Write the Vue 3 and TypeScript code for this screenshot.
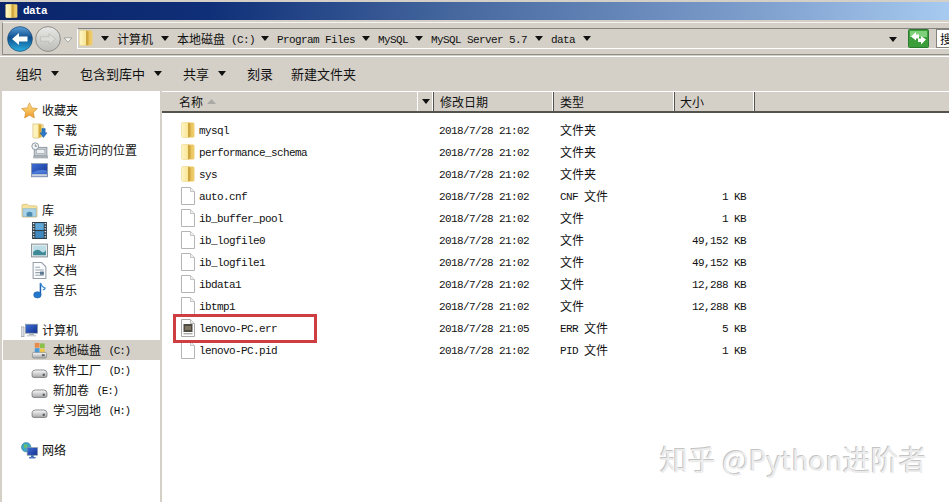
<script setup lang="ts">
interface Crumb { label: string; w: number }
interface NavItem { icon: string; label: string; child?: boolean; selected?: boolean; gapBefore?: boolean }
interface FileRow { name: string; icon: string; date: string; type: string; size: string }

const crumbs: Crumb[] = [
  { label: '计算机', w: 60 },
  { label: '本地磁盘\u00a0(C:)', w: 100 },
  { label: 'Program Files', w: 101 },
  { label: 'MySQL', w: 53 },
  { label: 'MySQL Server 5.7', w: 120 },
  { label: 'data', w: 48 },
]

const actions = [
  { label: '组织', menu: true, w: 64 },
  { label: '包含到库中', menu: true, w: 103 },
  { label: '共享', menu: true, w: 64 },
  { label: '刻录', menu: false, w: 44 },
  { label: '新建文件夹', menu: false, w: 70 },
]

const nav: NavItem[] = [
  { icon: 'star', label: '收藏夹' },
  { icon: 'dl', label: '下载', child: true },
  { icon: 'recent', label: '最近访问的位置', child: true },
  { icon: 'desk', label: '桌面', child: true },
  { icon: 'lib', label: '库', gapBefore: true },
  { icon: 'video', label: '视频', child: true },
  { icon: 'pic', label: '图片', child: true },
  { icon: 'doc', label: '文档', child: true },
  { icon: 'music', label: '音乐', child: true },
  { icon: 'pc', label: '计算机', gapBefore: true },
  { icon: 'cdrive', label: '本地磁盘\u00a0(C:)', child: true, selected: true },
  { icon: 'drive', label: '软件工厂\u00a0(D:)', child: true },
  { icon: 'drive', label: '新加卷\u00a0(E:)', child: true },
  { icon: 'drive', label: '学习园地\u00a0(H:)', child: true },
  { icon: 'net', label: '网络', gapBefore: true },
]

const d2 = '2018/7/28 21:02'
const files: FileRow[] = [
  { name: 'mysql', icon: 'folder', date: d2, type: '文件夹', size: '' },
  { name: 'performance_schema', icon: 'folder', date: d2, type: '文件夹', size: '' },
  { name: 'sys', icon: 'folder', date: d2, type: '文件夹', size: '' },
  { name: 'auto.cnf', icon: 'file', date: d2, type: 'CNF 文件', size: '1 KB' },
  { name: 'ib_buffer_pool', icon: 'file', date: d2, type: '文件', size: '1 KB' },
  { name: 'ib_logfile0', icon: 'file', date: d2, type: '文件', size: '49,152 KB' },
  { name: 'ib_logfile1', icon: 'file', date: d2, type: '文件', size: '49,152 KB' },
  { name: 'ibdata1', icon: 'file', date: d2, type: '文件', size: '12,288 KB' },
  { name: 'ibtmp1', icon: 'file', date: d2, type: '文件', size: '12,288 KB' },
  { name: 'lenovo-PC.err', icon: 'err', date: '2018/7/28 21:05', type: 'ERR 文件', size: '5 KB' },
  { name: 'lenovo-PC.pid', icon: 'file', date: d2, type: 'PID 文件', size: '1 KB' },
]

function runs(s: string): { t: string; cjk: boolean }[] {
  const out: { t: string; cjk: boolean }[] = []
  for (const m of s.matchAll(/[\u4e00-\u9fff]+|[^\u4e00-\u9fff]+/g)) {
    out.push({ t: m[0], cjk: /[\u4e00-\u9fff]/.test(m[0]) })
  }
  return out
}
</script>

<template>
  <div class="app">
    <svg class="defs" aria-hidden="true">
      <defs>
        <linearGradient id="gFolderL" x1="0" y1="0" x2="1" y2="0">
          <stop offset="0" stop-color="#fdf6c6" /><stop offset="1" stop-color="#f8e596" />
        </linearGradient>
        <linearGradient id="gFolderR" x1="0" y1="0" x2="1" y2="0">
          <stop offset="0" stop-color="#d9a93a" /><stop offset="1" stop-color="#f0cf6e" />
        </linearGradient>
        <linearGradient id="gBlue" x1="0" y1="0" x2="0" y2="1">
          <stop offset="0" stop-color="#5a9fd8" /><stop offset=".45" stop-color="#0f4f8e" /><stop offset="1" stop-color="#2bb0e0" />
        </linearGradient>
        <linearGradient id="gGrey" x1="0" y1="0" x2="0" y2="1">
          <stop offset="0" stop-color="#e8e8e6" /><stop offset="1" stop-color="#bcbcb8" />
        </linearGradient>
        <linearGradient id="gStar" x1="0" y1="0" x2="0" y2="1">
          <stop offset="0" stop-color="#fde58a" /><stop offset="1" stop-color="#ee9a2c" />
        </linearGradient>
        <linearGradient id="gScreen" x1="0" y1="0" x2="1" y2="1">
          <stop offset="0" stop-color="#3f6fd8" /><stop offset="1" stop-color="#12308e" />
        </linearGradient>
        <linearGradient id="gDrive" x1="0" y1="0" x2="0" y2="1">
          <stop offset="0" stop-color="#fafafa" /><stop offset="1" stop-color="#a8a8a8" />
        </linearGradient>
      </defs>
      <symbol id="i-folder" viewBox="0 0 16 20">
        <path d="M1.5 3.5 Q1.5 2.5 2.5 2.5 H13 Q14.5 2.5 14.5 4 V16 Q14.5 17.5 13 17.5 H3 Q1.5 17.5 1.5 16 Z" fill="url(#gFolderR)" />
        <path d="M1.5 3.5 Q1.5 2.5 2.5 2.5 H8 V17.5 H3 Q1.5 17.5 1.5 16 Z" fill="url(#gFolderL)" />
        <path d="M8 2.5 L10.5 3.8 V16.5 L8 17.5 Z" fill="#cfa63e" />
      </symbol>
      <symbol id="i-file" viewBox="0 0 16 20">
        <path d="M1.5 1.5 H10.5 L14.5 5.5 V18.5 H1.5 Z" fill="#fff" stroke="#b4b4b4" />
        <path d="M10.5 1.5 V5.5 H14.5" fill="#f0f0f0" stroke="#c4c4c4" />
      </symbol>
      <symbol id="i-err" viewBox="0 0 16 20">
        <path d="M1.5 1.5 H10.5 L14.5 5.5 V18.5 H1.5 Z" fill="#fdfdfd" stroke="#a8a8a8" />
        <path d="M10.5 1.5 V5.5 H14.5" fill="#eee" stroke="#bbb" />
        <rect x="3.5" y="6" width="9" height="8" fill="#4e4a40" />
        <rect x="5" y="8" width="6" height="4" fill="#7d7462" />
        <rect x="3.5" y="15" width="9" height="1.4" fill="#aaa" />
      </symbol>
      <symbol id="i-star" viewBox="0 0 16 16">
        <path d="M8 .8 L10.2 5.6 L15.4 6.2 L11.6 9.8 L12.6 15 L8 12.4 L3.4 15 L4.4 9.8 L.6 6.2 L5.8 5.6 Z" fill="url(#gStar)" stroke="#d08a2a" stroke-width=".6" />
      </symbol>
      <symbol id="i-dl" viewBox="0 0 16 18">
        <path d="M1 2 H9 L12 3 V15 L7 17 H2 Q1 17 1 16 Z" fill="url(#gFolderL)" stroke="#c8a24a" stroke-width=".5" />
        <path d="M7 2 L10 3 V15 L7 17 Z" fill="#d9a93a" />
        <path d="M10.5 7 H14 V11.5 H16 L12.2 16.5 L8.5 11.5 H10.5 Z" fill="#2a78c8" stroke="#185a9e" stroke-width=".5" />
      </symbol>
      <symbol id="i-recent" viewBox="0 0 16 16">
        <rect x="3" y="5" width="12" height="8" fill="#c6ccd2" stroke="#7b8690" stroke-width=".7" />
        <rect x="5" y="7" width="8" height="4" fill="#eef0f2" stroke="#8d99a3" stroke-width=".5" />
        <rect x="2" y="13" width="14" height="2.4" fill="#a9b0b6" />
        <circle cx="4" cy="4" r="3.2" fill="#f5f7f8" stroke="#7b8a96" stroke-width=".8" />
        <path d="M4 2.2 V4 H5.6" stroke="#52606c" stroke-width=".7" fill="none" />
      </symbol>
      <symbol id="i-desk" viewBox="0 0 16 14">
        <rect x=".5" y=".5" width="15" height="12.5" fill="url(#gScreen)" stroke="#7f8a9c" stroke-width=".6" />
        <path d="M1 9 Q8 5 15 7 V10 H1 Z" fill="#5c8ee8" opacity=".7" />
        <rect x="1" y="10.4" width="14" height="2.2" fill="#c9d2de" />
      </symbol>
      <symbol id="i-lib" viewBox="0 0 18 16">
        <path d="M1 3 Q1 1.5 2.5 1.5 H7 L8.5 3 H15.5 Q17 3 17 4.5 V14 Q17 15 16 15 H2 Q1 15 1 14 Z" fill="#f6e3a0" stroke="#c9ad58" stroke-width=".6" />
        <path d="M2 6 H16 V14.4 H2 Z" fill="#a8d2e8" stroke="#7aa8c2" stroke-width=".5" />
        <path d="M6 14.4 V10.5 Q9 8.2 12 10.5 V14.4 Z" fill="#4f8bb0" />
      </symbol>
      <symbol id="i-video" viewBox="0 0 14 16">
        <rect x="0" y="0" width="14" height="16" fill="#2e3c48" />
        <rect x="3" y="1" width="8" height="6.5" fill="#5fa8d8" />
        <rect x="3" y="8.5" width="8" height="6.5" fill="#3f88c0" />
        <path d="M.8 1.5 H2.2 M.8 4 H2.2 M.8 6.5 H2.2 M.8 9 H2.2 M.8 11.5 H2.2 M.8 14 H2.2 M11.8 1.5 H13.2 M11.8 4 H13.2 M11.8 6.5 H13.2 M11.8 9 H13.2 M11.8 11.5 H13.2 M11.8 14 H13.2" stroke="#e6eef4" stroke-width="1.1" />
      </symbol>
      <symbol id="i-pic" viewBox="0 0 16 13">
        <rect x=".5" y=".5" width="15" height="12" fill="#e9edee" stroke="#8c979e" />
        <rect x="2" y="2" width="12" height="9" fill="#bcdde6" />
        <path d="M2 8 Q6 4 9 7 T14 6 V11 H2 Z" fill="#3f8a96" />
      </symbol>
      <symbol id="i-doc" viewBox="0 0 13 16">
        <path d="M.5 .5 H8.5 L12.5 4.5 V15.5 H.5 Z" fill="#fbfcfd" stroke="#97a0a8" />
        <path d="M2.5 5 H7 M2.5 7.5 H10.5 M2.5 10 H10.5 M2.5 12.5 H10.5" stroke="#98a4ae" />
        <rect x="7" y="9" width="3.6" height="3" fill="#5b7690" />
      </symbol>
      <symbol id="i-music" viewBox="0 0 14 18">
        <path d="M8 1 V13" stroke="#1b62b0" stroke-width="1.6" fill="none" />
        <path d="M8 1 Q9 5 13 6.5 Q12.5 8.5 10.5 8" stroke="#3f8fd8" stroke-width="1.4" fill="none" />
        <ellipse cx="4.8" cy="13.6" rx="4" ry="3.4" fill="#2478cc" stroke="#15559c" stroke-width=".5" />
      </symbol>
      <symbol id="i-pc" viewBox="0 0 19 16">
        <rect x="0" y="4" width="3.4" height="11" fill="#d9dde0" stroke="#7f8a92" stroke-width=".6" />
        <rect x="5" y="1" width="13.5" height="10" fill="url(#gScreen)" stroke="#8a96a0" stroke-width=".8" />
        <rect x="9" y="11" width="5.6" height="2" fill="#aab2b8" />
        <rect x="6.5" y="13" width="10.5" height="1.6" fill="#c8ced2" />
      </symbol>
      <symbol id="i-cdrive" viewBox="0 0 16 18">
        <rect x="3" y="1" width="5" height="5" fill="#e88a4a" />
        <rect x="8.5" y="1.5" width="5" height="5" fill="#8cc04a" />
        <rect x="3" y="6.5" width="5" height="5" fill="#4a9ad8" />
        <rect x="8.5" y="7" width="5" height="5" fill="#f0c84a" />
        <rect x="0.5" y="11" width="15" height="6" rx="1.5" fill="url(#gDrive)" stroke="#6f7478" stroke-width=".6" />
        <rect x="10.5" y="13" width="3" height="2" fill="#5a5e60" />
      </symbol>
      <symbol id="i-drive" viewBox="0 0 16 16">
        <path d="M1 10 Q1.5 7.5 4 7.5 H12 Q14.5 7.5 15 10 V13 Q15 14.5 13.5 14.5 H2.5 Q1 14.5 1 13 Z" fill="url(#gDrive)" stroke="#666a6e" stroke-width=".7" />
        <rect x="11" y="11" width="2" height="2" fill="#55595c" />
      </symbol>
      <symbol id="i-net" viewBox="0 0 18 18">
        <circle cx="5.5" cy="5.5" r="5" fill="#3fa6c8" stroke="#1b7290" stroke-width=".5" />
        <path d="M3 3 Q5 1.5 7 3 L6 6 L3.5 6.5 Z" fill="#6cc06a" />
        <rect x="6.5" y="6" width="11" height="8" fill="url(#gScreen)" stroke="#8a96a0" stroke-width=".7" />
        <rect x="10.5" y="14" width="3" height="2" fill="#3a68b8" />
        <rect x="8.5" y="16" width="7" height="1.4" fill="#3a68b8" />
      </symbol>
    </svg>

    <header class="titlebar">
      <svg class="title-icon"><use href="#i-folder" /></svg>
      <span class="title-text">data</span>
    </header>

    <div class="address-row">
      <div class="address-frame">
        <svg class="nav-btn back" viewBox="0 0 26 26">
          <circle cx="13" cy="13" r="12.4" fill="url(#gBlue)" stroke="#0f3d66" stroke-width=".6" />
          <path d="M5 13 L12 7 V10.6 H20.5 V15.4 H12 V19 Z" fill="#fff" />
        </svg>
        <svg class="nav-btn fwd" viewBox="0 0 26 26">
          <circle cx="13" cy="13" r="12.4" fill="url(#gGrey)" stroke="#8e8e8a" />
          <path d="M20.5 13 L14 7.5 V10.8 H5.5 V15.2 H14 V18.5 Z" fill="#dcdcd8" stroke="#b4b4b0" stroke-width=".6" />
        </svg>
        <svg class="hist" viewBox="0 0 10 6"><path d="M1 .8 H9 L5 5.2 Z" fill="#f4f4f2" stroke="#8f8f8b" stroke-width=".7" /></svg>
        <div class="crumb-field">
          <svg class="crumb-folder"><use href="#i-folder" /></svg>
          <div class="crumbs">
            <div v-for="c in crumbs" :key="c.label" class="crumb" :style="{ width: c.w + 'px' }">
              <i class="tri"></i>
              <span class="txt"><span v-for="(r, i) in runs(c.label)" :key="i" :class="r.cjk ? 'cjk' : 'lat up'">{{ r.t }}</span></span>
            </div>
            <i class="tri last"></i>
          </div>
          <i class="tri end"></i>
          <svg class="refresh" viewBox="0 0 21 19">
            <rect x=".5" y=".5" width="20" height="18" rx="1" fill="#3b9e3b" stroke="#2c7a30" />
            <rect x="2" y="2" width="17" height="6" fill="#7ed07a" />
            <path d="M3 7.5 L8 3 V5.5 H11 V9.5 H8 V11.5 Z" fill="#fff" />
            <path d="M18 10.5 L13 15.5 V13 H10 V9.5 H13 V7 Z" fill="#fff" />
          </svg>
          <div class="search"><span class="cjk">搜</span></div>
        </div>
      </div>
    </div>

    <div class="commands">
      <div v-for="a in actions" :key="a.label" class="cmd" :style="{ width: a.w + 'px' }">
        <span class="cjk big">{{ a.label }}</span>
        <i v-if="a.menu" class="tri"></i>
      </div>
    </div>

    <main class="main">
      <aside class="sidebar">
        <div
          v-for="n in nav"
          :key="n.label"
          class="nav-item"
          :class="{ child: n.child, selected: n.selected, gap: n.gapBefore }"
        >
          <svg class="nav-icon"><use :href="'#i-' + n.icon" /></svg>
          <span class="txt"><span v-for="(r, i) in runs(n.label)" :key="i" :class="r.cjk ? 'cjk' : 'lat up tight'">{{ r.t }}</span></span>
        </div>
      </aside>

      <section class="list">
        <div class="thead">
          <div class="th name">
            <span class="cjk">名称</span>
            <svg class="sort" viewBox="0 0 9 5"><path d="M4.5 0 L9 5 H0 Z" fill="#a9a9a5" /></svg>
            <span class="th-drop"><i class="tri"></i></span>
          </div>
          <div class="th date"><span class="cjk">修改日期</span></div>
          <div class="th type"><span class="cjk">类型</span></div>
          <div class="th size"><span class="cjk">大小</span></div>
        </div>
        <div class="rows">
          <div v-for="f in files" :key="f.name" class="row">
            <div class="c-name">
              <svg class="file-icon"><use :href="'#i-' + f.icon" /></svg>
              <span class="lat low">{{ f.name }}</span>
            </div>
            <div class="c-date lat low">{{ f.date }}</div>
            <div class="c-type"><span v-for="(r, i) in runs(f.type)" :key="i" :class="r.cjk ? 'cjk' : 'lat up'">{{ r.t }}</span></div>
            <div class="c-size lat low">{{ f.size }}</div>
          </div>
        </div>
        <div class="mark"></div>
      </section>
    </main>

    <div class="watermark">知乎 @Python进阶者</div>
  </div>
</template>

<style scoped>
.app {
  position: relative;
  width: 949px;
  height: 502px;
  overflow: hidden;
  display: flex;
  flex-direction: column;
  background: #d4d0c8;
  color: #111;
  font-family: "Noto Sans CJK SC", sans-serif;
  font-size: 12px;
}
.defs { display: block; width: 0; height: 0; overflow: hidden; }
.cjk { font-family: "Noto Sans CJK SC", sans-serif; font-size: 12px; }
.cjk.big { font-size: 13px; }
.lat {
  font-family: "Liberation Mono", monospace;
  font-size: 11px;
  letter-spacing: -0.6px;
  white-space: pre;
}
.lat.up { vertical-align: 1px; }
.lat.tight { letter-spacing: -1.2px; word-spacing: 2px; }
.lat.low { padding-top: 2px; }
.tri {
  display: block;
  flex: none;
  width: 0;
  height: 0;
  border-left: 4px solid transparent;
  border-right: 4px solid transparent;
  border-top: 5px solid #111;
}

.titlebar {
  margin-top: 2px;
  height: 18px;
  flex: none;
  display: flex;
  align-items: center;
  padding-left: 4px;
  background: linear-gradient(90deg, #0a246a 0%, #0f2f78 22%, #46689f 48%, #7f9fcd 80%, #a6caf0 100%);
}
.title-icon { width: 15px; height: 18px; flex: none; }
.title-text {
  margin-left: 4px;
  color: #fff;
  font-family: "Liberation Mono", monospace;
  font-weight: 700;
  font-size: 11px;
  letter-spacing: -0.6px;
}

.address-row {
  height: 36px;
  flex: none;
  padding: 2px 0 0 2px;
  box-sizing: border-box;
}
.address-frame {
  height: 33px;
  box-sizing: border-box;
  display: flex;
  align-items: center;
  padding-left: 4px;
  border: 1px solid #fff;
  border-top-color: #f4f3ef;
  border-right: 0;
  border-bottom-color: #8e8c86;
  border-left-color: #8e8c86;
}
.nav-btn { width: 26px; height: 26px; flex: none; }
.fwd { margin-left: 2px; }
.hist { width: 10px; height: 6px; flex: none; margin: 2px 0 0 2px; }
.crumb-field {
  flex: 1;
  height: 21px;
  box-sizing: border-box;
  align-self: flex-start;
  margin: 5px 0 0 4px;
  display: flex;
  align-items: center;
  border-top: 1px solid #85837d;
  border-bottom: 1px solid #fff;
  border-left: 1px solid #fff;
  min-width: 0;
}
.crumb-folder { width: 16px; height: 20px; flex: none; margin-top: -1px; }
.crumbs { display: flex; align-items: center; margin-left: 7px; padding-bottom: 1px; }
.crumb { display: flex; align-items: center; flex: none; }
.crumb .txt { margin-left: 8px; white-space: pre; }
.crumbs .tri.last { margin-left: 0; }
.tri.end { margin-left: 298px; margin-top: 2px; }
.refresh { width: 21px; height: 19px; flex: none; margin-left: 11px; align-self: flex-end; }
.search {
  width: 20px;
  height: 19px;
  flex: none;
  margin-left: 7px;
  align-self: flex-end;
  background: #fff;
  border: 1px solid #85837d;
  border-right: 0;
  box-sizing: border-box;
  padding-left: 3px;
  line-height: 17px;
  overflow: hidden;
}

.commands {
  height: 35px;
  flex: none;
  box-sizing: border-box;
  display: flex;
  align-items: center;
  padding: 0 0 2px 16px;
  border-top: 1px solid #fff;
}
.cmd { display: flex; align-items: center; flex: none; gap: 9px; }
.cmd .tri { margin-top: 1px; }

.main { flex: 1; display: flex; min-height: 0; padding-left: 2px; }
.sidebar {
  width: 158px;
  flex: none;
  background: #fff;
  padding-top: 9px;
  box-sizing: border-box;
}
.nav-item {
  height: 20px;
  display: flex;
  align-items: center;
  padding-left: 19px;
}
.nav-item.child { padding-left: 29px; }
.nav-item.gap { margin-top: 20px; }
.nav-item.selected { background: #d4d0c8; margin-left: 1px; padding-left: 28px; }
.nav-icon { width: 17px; height: 17px; flex: none; }
.nav-item .txt { margin-left: 4px; white-space: pre; padding-bottom: 2px; }
.nav-item.child .txt { margin-left: 5px; }

.list {
  flex: 1;
  margin-left: 2px;
  background: #fff;
  min-width: 0;
  position: relative;
}
.thead {
  height: 22px;
  display: flex;
  box-sizing: border-box;
  background: #d4d0c8;
  border-top: 1px solid #fff;
  border-bottom: 2px solid #55534e;
}
.th {
  height: 100%;
  display: flex;
  align-items: center;
  flex: none;
  box-sizing: border-box;
  padding-left: 6px;
  border-right: 1px solid #55534e;
  box-shadow: inset -1px 0 0 #fff;
}
.th.name { width: 272px; padding-left: 17px; position: relative; }
.sort { width: 9px; height: 5px; margin-left: 4px; flex: none; }
.th-drop {
  margin-left: auto;
  width: 15px;
  height: 100%;
  display: flex;
  align-items: center;
  justify-content: center;
  border-left: 1px solid #fff;
}
.th.date { width: 120px; padding-left: 6px; }
.th.type { width: 121px; padding-left: 6px; }
.th.size { width: 80px; padding-left: 5px; }

.rows { padding-top: 6px; }
.row { height: 22px; display: flex; align-items: center; }
.c-name {
  width: 277px;
  flex: none;
  display: flex;
  align-items: center;
  padding-left: 18px;
  box-sizing: border-box;
}
.file-icon { width: 16px; height: 20px; flex: none; margin-right: 3px; }
.c-date { width: 121px; flex: none; box-sizing: content-box; }
.c-type { width: 100px; flex: none; padding-bottom: 2px; }
.c-size { width: 86px; flex: none; text-align: right; }

.mark {
  position: absolute;
  left: 11px;
  top: 223px;
  width: 144px;
  height: 29px;
  box-sizing: border-box;
  border: 3px solid #cd3d41;
}
.watermark {
  position: absolute;
  left: 660px;
  top: 441px;
  font-family: "Noto Sans CJK SC", sans-serif;
  font-size: 28px;
  line-height: 36px;
  white-space: nowrap;
  color: #ececec;
  text-shadow: -1px -1px 0 #c4c4c4;
}
</style>
